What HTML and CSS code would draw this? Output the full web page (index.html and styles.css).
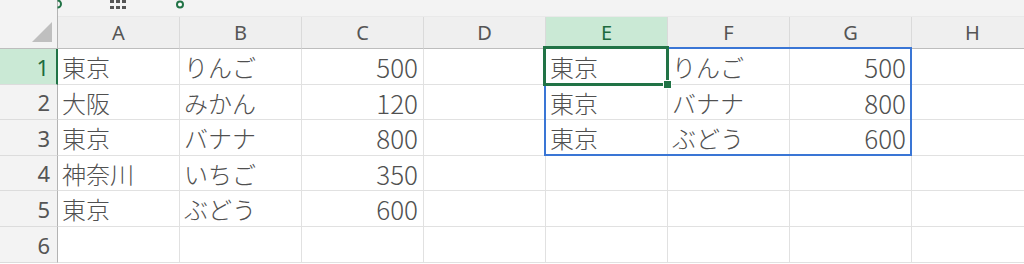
FILE: index.html
```html
<!DOCTYPE html>
<html lang="ja">
<head>
    <meta charset="UTF-8">
    <title>Sheet1</title>
    <link rel="stylesheet" href="styles.css">
</head>
<body>

<div class="sheet">
    <div class="corner"></div>
    <div class="strip"></div>

    <!-- en-têtes de colonnes -->
    <div class="col-head">A</div>
    <div class="col-head">B</div>
    <div class="col-head">C</div>
    <div class="col-head">D</div>
    <div class="col-head active">E</div>
    <div class="col-head">F</div>
    <div class="col-head">G</div>
    <div class="col-head">H</div>

    <div class="row-head active">1</div>
    <div class="cell">東京</div><div class="cell">りんご</div><div class="cell num">500</div><div class="cell"></div>
    <div class="cell">東京</div><div class="cell">りんご</div><div class="cell num">500</div><div class="cell"></div>

    <div class="row-head">2</div>
    <div class="cell">大阪</div><div class="cell">みかん</div><div class="cell num">120</div><div class="cell"></div>
    <div class="cell">東京</div><div class="cell">バナナ</div><div class="cell num">800</div><div class="cell"></div>

    <div class="row-head">3</div>
    <div class="cell">東京</div><div class="cell">バナナ</div><div class="cell num">800</div><div class="cell"></div>
    <div class="cell">東京</div><div class="cell">ぶどう</div><div class="cell num">600</div><div class="cell"></div>

    <div class="row-head">4</div>
    <div class="cell">神奈川</div><div class="cell">いちご</div><div class="cell num">350</div><div class="cell"></div>
    <div class="cell"></div><div class="cell"></div><div class="cell"></div><div class="cell"></div>

    <div class="row-head">5</div>
    <div class="cell">東京</div><div class="cell">ぶどう</div><div class="cell num">600</div><div class="cell"></div>
    <div class="cell"></div><div class="cell"></div><div class="cell"></div><div class="cell"></div>

    <div class="row-head">6</div>
    <div class="cell"></div><div class="cell"></div><div class="cell"></div><div class="cell"></div>
    <div class="cell"></div><div class="cell"></div><div class="cell"></div><div class="cell"></div>

    <!-- poignées de l'objet au-dessus de la feuille -->
    <svg class="handles" width="200" height="17" viewBox="0 0 200 17">
        <path d="M57.5 0.5 A3.5 3.5 0 0 1 57.5 7.5" fill="none" stroke="#217346" stroke-width="2"/>
        <circle cx="180" cy="4.5" r="3" fill="#fff" stroke="#217346" stroke-width="2"/>
        <rect x="110" y="0" width="4" height="3" fill="#555"/>
        <rect x="116" y="0" width="4" height="3" fill="#555"/>
        <rect x="122" y="0" width="4" height="3" fill="#555"/>
        <rect x="110" y="6" width="4" height="3" fill="#555"/>
        <rect x="116" y="6" width="4" height="3" fill="#555"/>
        <rect x="122" y="6" width="4" height="3" fill="#555"/>
    </svg>

    <!-- plage copiée E1:G3 et cellule active -->
    <div class="range"></div>
    <div class="active-cell"></div>
    <div class="fill-handle"></div>
</div>

</body>
</html>
```

FILE: styles.css
```css
* {
    box-sizing: border-box;
}
body {
    margin: 0;
    background-color: #fff;
    overflow: hidden;
    font-family: "Noto Sans CJK JP", sans-serif;
}
.sheet {
    position: relative;
    display: grid;
    grid-template-columns: 58px repeat(8, 122px);
    grid-template-rows: 17px 32px 36px 35px 36px 35px 36px 36px;
    width: 1034px;
}
.corner {
    grid-row: 1 / 3;
    position: relative;
    background-color: #f3f3f3;
    border-right: 1px solid #b3b3b3;
    border-bottom: 1px solid #bdbdbd;
}
.corner::after {
    content: "";
    position: absolute;
    right: 5px;
    bottom: 6px;
    width: 20px;
    height: 20px;
    background-color: #bfbfbf;
    clip-path: polygon(100% 0, 100% 100%, 0 100%);
}
.strip {
    grid-column: 2 / -1;
    background-color: #f3f3f3;
    border-bottom: 1px solid #e9e9e9;
}
.col-head {
    display: flex;
    align-items: center;
    justify-content: center;
    background-color: #efefef;
    border-right: 1px solid #dadada;
    border-bottom: 1px solid #bdbdbd;
    font-family: "Noto Sans", sans-serif;
    font-size: 20px;
    color: #555;
}
.col-head.active {
    background-color: #cae9d5;
    color: #1e6b3e;
    border-bottom: 2px solid #217346;
}
.row-head {
    display: flex;
    align-items: center;
    justify-content: flex-end;
    padding-right: 7px;
    background-color: #f3f3f3;
    border-right: 1px solid #b3b3b3;
    border-bottom: 1px solid #dcdcdc;
    font-family: "Noto Sans", sans-serif;
    font-size: 22px;
    color: #555;
}
.row-head.active {
    background-color: #cae9d5;
    color: #1e6b3e;
    border-right: 2px solid #217346;
}
.cell {
    display: flex;
    align-items: center;
    padding: 0 4px;
    border-right: 1px solid #e1e1e1;
    border-bottom: 1px solid #e1e1e1;
    font-size: 24px;
    font-weight: 300;
    color: #505050;
    white-space: nowrap;
}
.cell.num {
    justify-content: flex-end;
    padding-right: 5px;
    font-size: 26px;
}
.handles {
    position: absolute;
    left: 0;
    top: 0;
}
.range {
    position: absolute;
    left: 544px;
    top: 47px;
    width: 368px;
    height: 109px;
    border: 2px solid #3a76d5;
}
.active-cell {
    position: absolute;
    left: 543px;
    top: 46px;
    width: 126px;
    height: 40px;
    border: 3px solid #217346;
}
.fill-handle {
    position: absolute;
    left: 664px;
    top: 81px;
    width: 7px;
    height: 7px;
    background-color: #217346;
    outline: 1px solid #fff;
}
```
